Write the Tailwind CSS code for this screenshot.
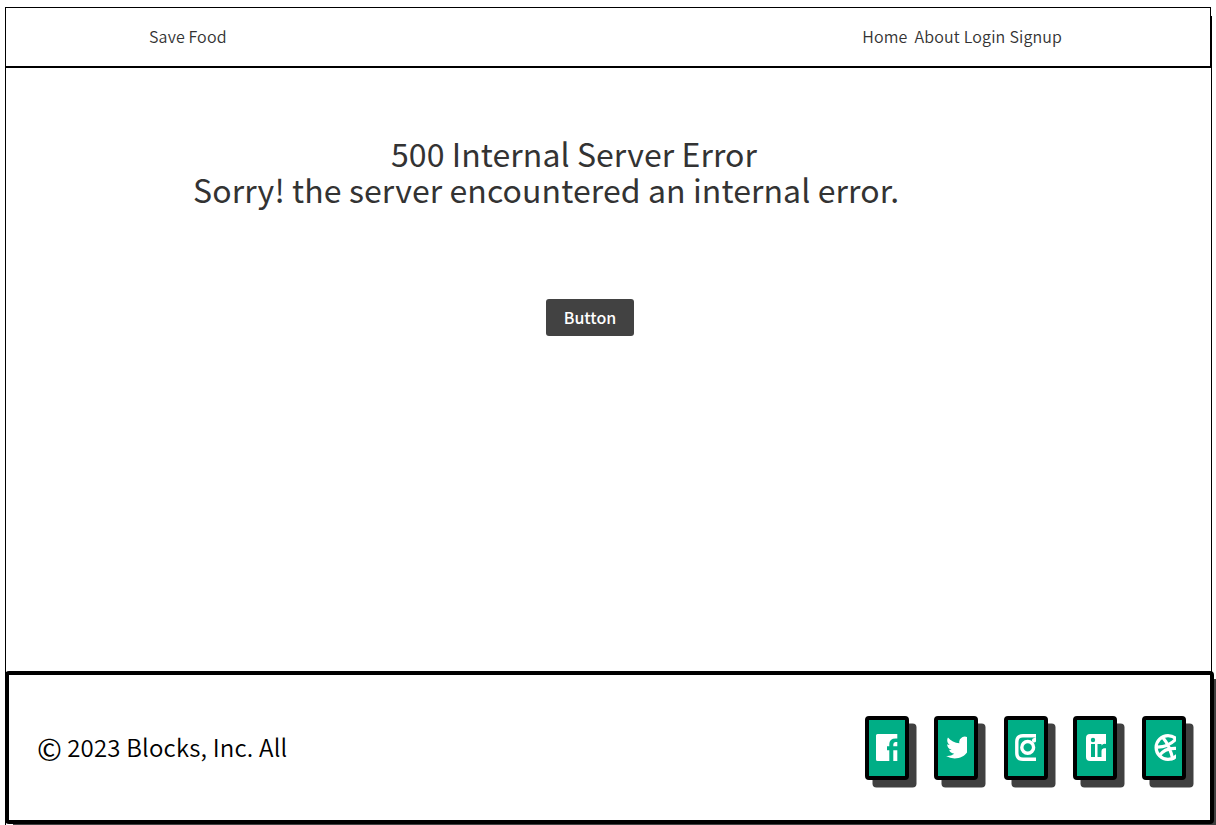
<!DOCTYPE html>
<html lang="en"><head><meta charset="utf-8"><title>Save Food</title>
<script src="https://cdn.jsdelivr.net/npm/@tailwindcss/browser@4"></script></head>
<body class="h-[825px] overflow-hidden bg-white font-['Noto_Sans_CJK_SC',sans-serif] text-[#333]">
<div class="ml-[5px] flex h-[825px] w-[1211px] flex-col pt-[7px]">
<header class="flex h-[61px] w-[1206px] shrink-0 items-center justify-between border border-b-2 border-black pr-[148px] pb-[2px] pl-[143px] text-[16px] font-[350] tracking-[0.13px] shadow-[1px_9px_0_0px_#000] [clip-path:inset(0_-1px_0_0)]">
<span class="whitespace-pre">Save Food</span>
<nav class="flex"><a class="mr-[7px]">Home</a><a class="mr-1">About</a><a class="mr-1">Login</a><a>Signup</a></nav>
</header>
<div class="flex h-[757px] w-[1207px] shrink-0 flex-col border-x border-black">
<main class="flex h-[603px] shrink-0 flex-col pt-[67px]">
<h1 class="pl-[385px] text-[32px] leading-9 tracking-[0.08px] whitespace-nowrap">500 Internal Server Error</h1>
<h2 class="pl-[187px] text-[32px] leading-9 tracking-[0.1px] whitespace-nowrap">Sorry! the server encountered an internal error.</h2>
<button class="mt-[92px] ml-[540px] h-[37px] w-[88px] rounded-[3px] bg-[#424242] pb-[2px] text-[16px] font-medium text-white">Button</button>
</main>
<footer class="-ml-px flex h-[153px] w-[1209px] shrink-0 items-center justify-between rounded-[4px] border-4 border-black bg-white pr-[24px] pl-[28px] text-black shadow-[8px_8px_0_#404040]">
<p class="flex items-center pb-[2px] text-[24px] font-[350] tracking-[0.2px]"><span class="mr-[5px] pt-[2px] text-[30px] leading-9 font-normal">©</span>2023 Blocks, Inc. All</p>
<div class="flex gap-[25.25px]">
<a class="flex h-16 w-11 items-center justify-center rounded-[4px] border-4 border-black bg-[#00ae86] shadow-[7.5px_7.5px_0_#404040]"><svg class="h-[27px] w-[22px] fill-white" viewBox="0 0 22 27"><path d="M1.500 0H21.300V4.500Q13.300 3.800 13.300 10V12.300H11V16.300H13.300V27H1.500Q0 27 0 25.500V1.500Q0 0 1.500 0M21.300 8V12.300H17.300V10.500Q17.300 8 19.500 8zM17.300 16.300H21.300V27H17.300z"/></svg></a>
<a class="flex h-16 w-11 items-center justify-center rounded-[4px] border-4 border-black bg-[#00ae86] shadow-[7.5px_7.5px_0_#404040]"><svg class="h-[27px] w-[22px] fill-white" viewBox="-1 0 19.56 24"><path d="M23.953 4.57a10 10 0 01-2.825.775 4.958 4.958 0 002.163-2.723c-.951.555-2.005.959-3.127 1.184a4.92 4.92 0 00-8.384 4.482C7.69 8.095 4.067 6.13 1.64 3.162a4.822 4.822 0 00-.666 2.475c0 1.71.87 3.213 2.188 4.096a4.904 4.904 0 01-2.228-.616v.06a4.923 4.923 0 003.946 4.827 4.996 4.996 0 01-2.212.085 4.936 4.936 0 004.604 3.417 9.867 9.867 0 01-6.102 2.105c-.39 0-.779-.023-1.17-.067a13.995 13.995 0 007.557 2.209c9.053 0 13.998-7.496 13.998-13.985 0-.21 0-.42-.015-.63A9.935 9.935 0 0024 4.590z"/></svg></a>
<a class="flex h-16 w-11 items-center justify-center rounded-[4px] border-4 border-black bg-[#00ae86] shadow-[7.5px_7.5px_0_#404040]"><svg class="h-[27px] w-[22px] fill-none stroke-white" viewBox="0 0 22 27" stroke-width="3.400"><path d="M21 1.700H8Q1.800 1.700 1.800 8V19Q1.800 25.300 8 25.300H21"/><circle cx="12.700" cy="13.400" r="5.900"/><path d="M21 3v4.500a2.200 2.200 0 1 1-2.500-3.300z" class="fill-white stroke-none"/></svg></a>
<a class="flex h-16 w-11 items-center justify-center rounded-[4px] border-4 border-black bg-[#00ae86] shadow-[7.5px_7.5px_0_#404040]"><svg class="h-[27px] w-[22px] fill-white" viewBox="0 0 22 27"><path fill-rule="evenodd" d="M6 0H22v10q-2.800-.6-4.500 1.500V10h-4v13h4v-6q0-3 3-3.200H22V27H6Q2 27 2 23V4Q2 0 6 0M7 10v13h4V10zM9 3.800a2.200 2.200 0 1 0 0 4.400a2.200 2.200 0 0 0 0-4.400"/><path d="M18 11.500q1.500-1.500 4-1.200v4h-1.500q-2.500-.5-3 2.500z" class="fill-[#00ae86]"/></svg></a>
<a class="flex h-16 w-11 items-center justify-center rounded-[4px] border-4 border-black bg-[#00ae86] shadow-[7.5px_7.5px_0_#404040]"><svg class="h-[27px] w-[23px] shrink-0 fill-none stroke-white" viewBox="0 0 23 27" stroke-width="3.200"><circle cx="15" cy="13.500" r="11.900"/><path d="M9.500 3Q17 12 20 26M3 13Q15 13.500 23 5M6 22Q12 13 25 14.500"/></svg></a>
</div></footer>
</div>
</div></body></html>
